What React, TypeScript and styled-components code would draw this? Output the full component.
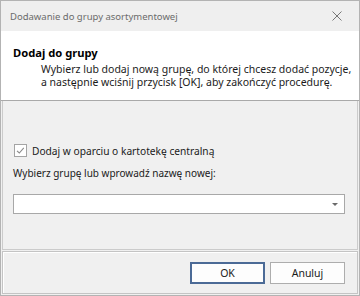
import React, {useState} from 'react';
import styled, {createGlobalStyle} from 'styled-components';

const Global = createGlobalStyle`
  html, body {
    margin: 0;
    padding: 0;
    background: #ffffff;
  }
  body {
    font-family: "Noto Sans", "Liberation Sans", sans-serif;
    font-size: 10.5px;
    color: #1b1b1b;
  }
`;

export default function App() {
  const [central, setCentral] = useState(true);
  const [group, setGroup] = useState('');

  return (
    <>
      <Global />
      <Window>
        <TitleBar>
          <Title>Dodawanie do grupy asortymentowej</Title>
          <CloseButton aria-label="Zamknij">
            <svg width="10" height="10" viewBox="0 0 10 10">
              <path d="M0.5 0.5 L9.5 9.5 M9.5 0.5 L0.5 9.5" stroke="#777" strokeWidth="1" fill="none" />
            </svg>
          </CloseButton>
        </TitleBar>

        <Header>
          <Heading>Dodaj do grupy</Heading>
          <Description>
            Wybierz lub dodaj nową grupę, do której chcesz dodać pozycje,<br />
            a następnie wciśnij przycisk [OK], aby zakończyć procedurę.
          </Description>
        </Header>

        <Body>
          <CheckRow onClick={() => setCentral(!central)}>
            <CheckBox>
              {central && (
                <svg width="11" height="11" viewBox="0 0 11 11">
                  <path d="M2 5.8 L4.3 8 L8.8 2.8" stroke="#8a8a8a" strokeWidth="1.1" fill="none" />
                </svg>
              )}
            </CheckBox>
            <span>Dodaj w oparciu o kartotekę centralną</span>
          </CheckRow>

          <FieldLabel>Wybierz grupę lub wprowadź nazwę nowej:</FieldLabel>

          <Combo>
            <ComboInput value={group} onChange={e => setGroup(e.target.value)} />
            <ComboArrow />
          </Combo>
        </Body>

        <Footer>
          <Button primary>OK</Button>
          <Button>Anuluj</Button>
        </Footer>
      </Window>
    </>
  );
}

const Window = styled.div`
  box-sizing: border-box;
  width: 360px;
  height: 296px;
  border: 1px solid #b3b3b3;
  background: #f0f0f0;
  display: flex;
  flex-direction: column;
`;

const TitleBar = styled.div`
  height: 30px;
  flex: none;
  display: flex;
  align-items: center;
  justify-content: space-between;
  padding: 0 17px 0 9px;
  background: #efefef;
`;

const Title = styled.div`
  color: #6b6b6b;
  font-size: 9.5px;
`;

const CloseButton = styled.div`
  width: 10px;
  height: 10px;
  display: flex;
`;

const Header = styled.div`
  box-sizing: border-box;
  height: 70px;
  flex: none;
  background: #ffffff;
  border-bottom: 1px solid #a9a9a9;
  padding: 14px 0 0 12px;
`;

const Heading = styled.div`
  font-weight: bold;
  font-size: 11.2px;
  line-height: 15px;
  color: #000;
`;

const Description = styled.div`
  margin: 3px 0 0 28px;
  font-size: 10.5px;
  line-height: 13px;
  color: #1b1b1b;
  white-space: nowrap;
`;

const Body = styled.div`
  box-sizing: border-box;
  height: 149px;
  flex: none;
  margin: 0 1px;
  border: 1px solid #cbcbcb;
  border-top: none;
  padding: 42px 10px 0 10px;
  display: flex;
  flex-direction: column;
`;

const CheckRow = styled.label`
  display: flex;
  align-items: center;
  gap: 5px;
  padding-left: 1px;
  height: 15px;
  font-size: 10.2px;
  cursor: default;
`;

const CheckBox = styled.span`
  box-sizing: border-box;
  width: 13px;
  height: 13px;
  border: 1px solid #a4a4a4;
  background: #fff;
  display: flex;
  align-items: center;
  justify-content: center;
`;

const FieldLabel = styled.div`
  margin-top: 7px;
  line-height: 16px;
  font-size: 10px;
`;

const Combo = styled.div`
  box-sizing: border-box;
  margin-top: 13px;
  width: 332px;
  height: 20px;
  border: 1px solid #a8a8a8;
  background: #fff;
  display: flex;
  align-items: center;
`;

const ComboInput = styled.input`
  flex: 1;
  min-width: 0;
  border: none;
  outline: none;
  background: transparent;
  font: inherit;
  padding: 0 4px;
  height: 18px;
`;

const ComboArrow = styled.span`
  width: 0;
  height: 0;
  margin: 1px 6px 0 0;
  border-left: 3px solid transparent;
  border-right: 3px solid transparent;
  border-top: 3px solid #6a6a6a;
`;

const Footer = styled.div`
  box-sizing: border-box;
  height: 43px;
  flex: none;
  margin: 1px 1px 0;
  border: 1px solid #c4c4c4;
  box-shadow: inset 1px 1px 0 #ffffff;
  display: flex;
  align-items: center;
  justify-content: flex-end;
  gap: 5px;
  padding: 0 12px 0 0;
`;

const Button = styled.button<{primary?: boolean}>`
  box-sizing: border-box;
  width: 75px;
  height: 22px;
  background: #fdfdfd;
  border: ${p => p.primary ? '2px solid #4b6a96' : '1px solid #adadad'};
  border-radius: 0;
  font-family: inherit;
  font-size: 10.5px;
  color: #1b1b1b;
  padding: 0;
`;
